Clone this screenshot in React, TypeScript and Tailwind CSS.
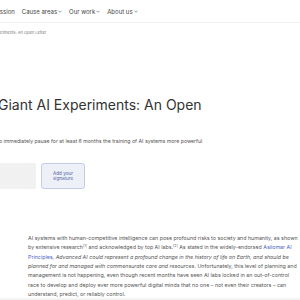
import React from 'react';

const NavItem: React.FC<{ label: string }> = ({ label }) => (
  <span className="flex items-center gap-[1px]">
    {label}
    <svg width="4" height="3" viewBox="0 0 8 5" className="mt-[1px]">
      <path d="M1 1l3 3 3-3" fill="none" stroke="#555" strokeWidth="1.2" />
    </svg>
  </span>
);

const App: React.FC = () => {
  return (
    <div className="w-[300px] h-[300px] overflow-hidden bg-white relative font-['Inter',sans-serif] text-[#3a3a3a]">
      {/* Top nav */}
      <div className="h-[23px] border-b border-[#efefef] flex items-center">
        <div className="flex items-center gap-[7px] text-[6px] text-[#444] -ml-[7px] whitespace-nowrap">
          <span>Mission</span>
          <NavItem label="Cause areas" />
          <NavItem label="Our work" />
          <NavItem label="About us" />
        </div>
      </div>

      {/* Breadcrumb */}
      <div className="mt-[7px] text-[4px] text-[#777] whitespace-nowrap -ml-[1px]">
        eriments: An Open Letter
      </div>

      {/* Title */}
      <h1 className="mt-[61px] -ml-[2px] text-[14px] leading-[16px] text-[#333] whitespace-nowrap">
        Giant AI Experiments: An Open
      </h1>

      <p className="mt-[25px] -ml-[1px] text-[5.2px] text-[#555] whitespace-nowrap">
        o immediately pause for at least 6 months the training of AI systems more powerful
      </p>

      {/* Signature form */}
      <div className="mt-[17px] flex gap-[5px]">
        <div className="w-[36px] h-[26px] bg-[#f1f1f1] rounded-r-[2px]" />
        <button className="w-[44px] h-[26px] rounded-[3px] border border-[#c6cbe4] bg-[#eef0f8] text-[4.6px] leading-[5px] text-[#5462a6]">
          Add your
          <br />
          signature
        </button>
      </div>

      {/* Body */}
      <div className="mt-[45px] ml-[28px] text-[5.3px] leading-[9.4px] text-[#555] whitespace-nowrap">
        <div>AI systems with human-competitive intelligence can pose profound risks to society and humanity, as shown</div>
        <div>
          by extensive research<sup className="text-[3.5px]">[1]</sup> and acknowledged by top AI labs.
          <sup className="text-[3.5px]">[2]</sup> As stated in the widely-endorsed{' '}
          <span className="text-[#4b5fc4]">Asilomar AI</span>
        </div>
        <div>
          <span className="text-[#4b5fc4]">Principles</span>, <i>Advanced AI could represent a profound change in the history of life on Earth, and should be</i>
        </div>
        <div>
          <i>planned for and managed with commensurate care and resources</i>. Unfortunately, this level of planning and
        </div>
        <div>management is not happening, even though recent months have seen AI labs locked in an out-of-control</div>
        <div>race to develop and deploy ever more powerful digital minds that no one – not even their creators – can</div>
        <div>understand, predict, or reliably control.</div>
      </div>

      <div className="absolute left-0 right-0 bottom-0 h-[3px] bg-gradient-to-b from-white to-[#eeeeee]" />
    </div>
  );
};

export default App;
